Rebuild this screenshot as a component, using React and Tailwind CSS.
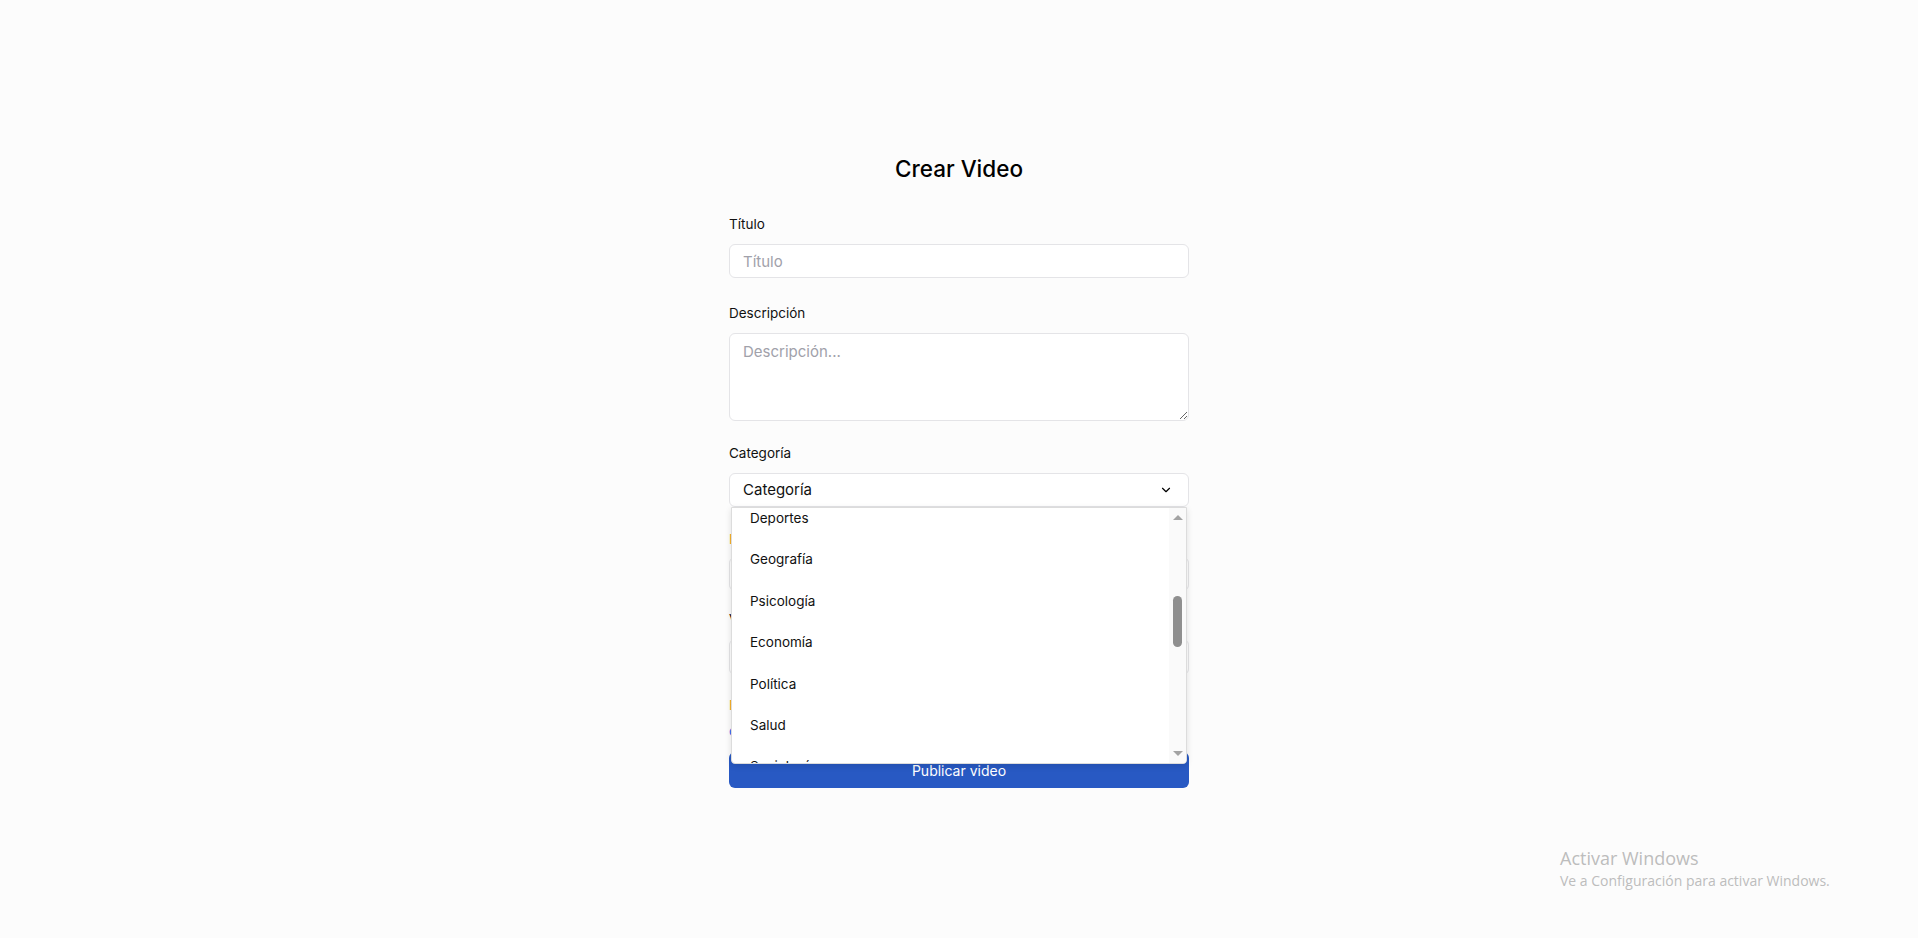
import React from 'react'
import { ChevronDown } from 'lucide-react'

const categorias = ['Deportes', 'Geografía', 'Psicología', 'Economía', 'Política', 'Salud', 'Sociología']

const Label = ({ children }) => (
  <label className="block text-[13.5px] leading-5 text-[#111] mb-[10px]">{children}</label>
)

const inputCls =
  'w-full h-[34px] rounded-md border border-[#e4e4e7] bg-white px-[13px] text-[15px] text-[#111] placeholder:text-[#a1a1aa] outline-none'

// Native select popup as it appears open over the form
const CategoryList = () => (
  <div className="absolute left-[2px] right-[2px] top-[34px] h-[257px] bg-white border border-[#dcdcdc] rounded-b-[4px] shadow-[0_2px_6px_rgba(0,0,0,0.12)] overflow-hidden flex z-10">
    <div className="flex-1 overflow-hidden">
      <ul className="-mt-[10.5px]">
        {categorias.map((c) => (
          <li key={c} className="h-[41.4px] flex items-center pl-[18px] text-[13.5px] text-[#111]">
            {c}
          </li>
        ))}
      </ul>
    </div>
    <div className="w-[17px] bg-[#fafafa] flex flex-col items-center justify-between py-[7px]">
      <div className="w-0 h-0 border-l-[5px] border-r-[5px] border-b-[5px] border-l-transparent border-r-transparent border-b-[#a3a3a3]" />
      <div className="flex-1 w-full flex flex-col items-center">
        <div className="mt-[76px] w-[9px] h-[51px] rounded-full bg-[#8f8f8f]" />
      </div>
      <div className="w-0 h-0 border-l-[5px] border-r-[5px] border-t-[5px] border-l-transparent border-r-transparent border-t-[#a3a3a3]" />
    </div>
  </div>
)

export default function App() {
  return (
    <div className="relative min-h-screen h-[938px] bg-[#fcfcfc] font-['Inter',sans-serif] overflow-hidden">
      <div className="w-[460px] mx-auto pt-[153px]">
        <h1 className="text-center text-[22.5px] leading-8 font-medium text-black">Crear Video</h1>

        <form className="mt-[29px] flex flex-col" onSubmit={(e) => e.preventDefault()}>
          <div>
            <Label>Título</Label>
            <input className={inputCls} placeholder="Título" />
          </div>

          <div className="mt-[25px]">
            <Label>Descripción</Label>
            <textarea
              className="block w-full h-[88px] rounded-md border border-[#e4e4e7] bg-white px-[13px] py-[7px] text-[15px] text-[#111] placeholder:text-[#a1a1aa] outline-none"
              placeholder="Descripción..."
            />
          </div>

          <div className="mt-[22px]">
            <Label>Categoría</Label>
            <div className="relative">
              <div className="h-[34px] rounded-md border border-[#e4e4e7] bg-white px-[13px] flex items-center justify-between text-[15px] text-[#111]">
                <span>Categoría</span>
                <ChevronDown size={14} strokeWidth={2} className="text-black mr-[2px]" />
              </div>
              <CategoryList />

              {/* fields hidden behind the open list */}
              <div className="pt-[22px]">
                <p className="text-[13.5px] leading-5 text-[#f5a524]">Etiquetas</p>
                <input className={`${inputCls} mt-[8px] border-[#dcdcf0]`} placeholder="Etiquetas" />
                <p className="mt-[18px] text-[13.5px] leading-5 text-[#111]">Video</p>
                <input className={`${inputCls} mt-[10px] h-[36px] border-[#dcdcf0]`} placeholder="URL" />
                <p className="mt-[20px] text-[13.5px] leading-5 text-[#f5a524]">El video debe durar menos de 10 minutos</p>
                <p className="mt-[6px] text-[13.5px] leading-5 text-[#2563eb]">o subir archivo</p>
              </div>
              <button
                type="submit"
                className="mt-[11px] w-full h-[36px] rounded-md bg-[#2859c3] text-white text-[14px] flex items-center justify-center"
              >
                Publicar video
              </button>
            </div>
          </div>
        </form>
      </div>

      <div className="absolute left-[1560px] top-[846px] text-[#bdbdbd] font-['Open_Sans',sans-serif] pointer-events-none">
        <p className="text-[18px] leading-6">Activar Windows</p>
        <p className="text-[14px] leading-5 mt-[1px]">Ve a Configuración para activar Windows.</p>
      </div>
    </div>
  )
}
